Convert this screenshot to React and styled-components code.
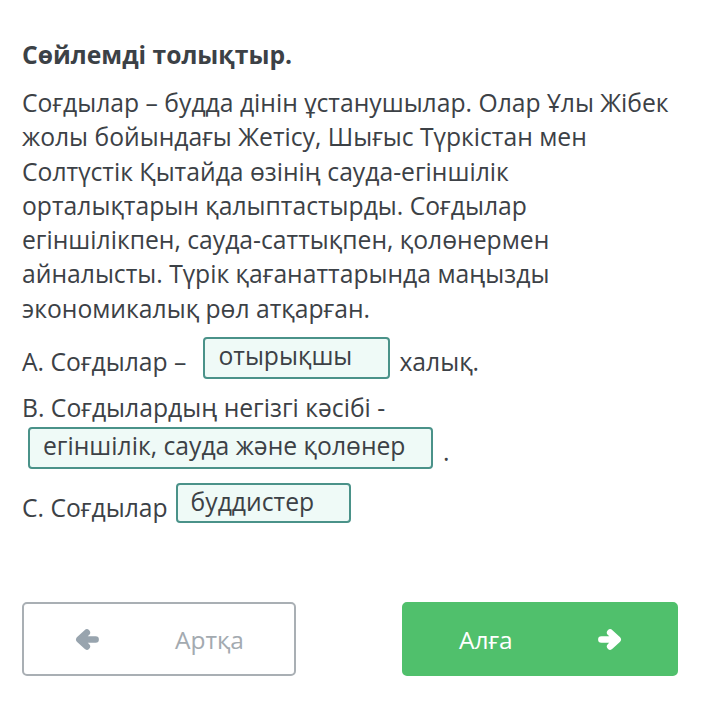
import React from 'react'
import styled, { createGlobalStyle } from 'styled-components'

const GlobalStyle = createGlobalStyle`
  html, body {
    margin: 0;
    padding: 0;
    background: #fff;
  }
  body {
    font-family: "Open Sans", "Noto Sans", sans-serif;
    color: #3c4146;
  }
`

const Page = styled.div`
  width: 709px;
  height: 713px;
  box-sizing: border-box;
  padding: 38px 20px 0 22px;
  display: flex;
  flex-direction: column;
  font-size: 24.7px;
`

const Title = styled.h2`
  margin: 0;
  font-size: 24.7px;
  font-weight: 700;
  line-height: 34px;
  color: #3c4146;
`

const Passage = styled.p`
  margin: 14px 0 0;
  line-height: 34.3px;
`

const Sentences = styled.div`
  margin-top: 11px;
  display: flex;
  flex-direction: column;
  line-height: 34px;
`

const Line = styled.div`
  display: flex;
  align-items: flex-start;
  margin-top: ${p => p.$top || 0}px;
  padding-left: ${p => p.$indent || 0}px;
`

const Text = styled.span`
  margin-top: ${p => (p.$flush ? 0 : 8)}px;
  white-space: nowrap;
`

const Blank = styled.span`
  display: inline-flex;
  box-sizing: border-box;
  width: ${p => p.$w}px;
  height: ${p => p.$h || 42}px;
  margin: 0 ${p => p.$mr || 9}px 0 ${p => p.$ml || 0}px;
  padding: 0 13px;
  border: 2px solid #4a9289;
  border-radius: 4px;
  background: #effaf7;
  color: #3c4146;
  white-space: nowrap;
`

const Footer = styled.div`
  margin-top: auto;
  margin-bottom: 37px;
  padding-right: 11px;
  display: flex;
  justify-content: space-between;
`

const NavButton = styled.button`
  box-sizing: border-box;
  width: ${p => p.$w}px;
  height: 74px;
  display: flex;
  align-items: center;
  padding: 0 0 0 ${p => p.$pl}px;
  gap: ${p => p.$gap}px;
  border-radius: 5px;
  font-family: "Open Sans", sans-serif;
  font-size: 24.5px;
  cursor: pointer;
  border: 2px solid ${p => (p.$primary ? '#50c06c' : '#a9afb4')};
  background: ${p => (p.$primary ? '#50c06c' : '#fff')};
  color: ${p => (p.$primary ? '#fff' : '#a3aab0')};
`

const ArrowSvg = styled.svg`
  width: 24px;
  height: 21px;
  flex: none;
  fill: none;
  stroke: ${p => (p.$light ? '#fff' : '#98a4ae')};
  stroke-width: 6.6;
  stroke-linecap: round;
  stroke-linejoin: round;
  transform: ${p => (p.$left ? 'scaleX(-1)' : 'none')};
`

function Arrow({ left, light }) {
  return (
    <ArrowSvg viewBox="0 0 24 21" $left={left} $light={light}>
      <path d="M3.4 10.5H19.5M12.2 3.6L19.6 10.5L12.2 17.4" />
    </ArrowSvg>
  )
}

export default function App() {
  return (
    <>
      <GlobalStyle />
      <Page>
        <Title>Сөйлемді толықтыр.</Title>
        <Passage>
          Соғдылар – будда дінін ұстанушылар. Олар Ұлы Жібек жолы бойындағы Жетісу, Шығыс Түркістан мен
          Солтүстік Қытайда өзінің сауда-егіншілік орталықтарын қалыптастырды. Соғдылар егіншілікпен,
          сауда-саттықпен, қолөнермен айналысты. Түрік қағанаттарында маңызды экономикалық рөл атқарған.
        </Passage>
        <Sentences>
          <Line>
            <Text>А. Соғдылар –</Text>
            <Blank $w={187} $ml={17}>отырықшы</Blank>
            <Text>халық.</Text>
          </Line>
          <Line $top={12}>
            <Text $flush>В. Соғдылардың негізгі кәсібі -</Text>
          </Line>
          <Line $top={2} $indent={6}>
            <Blank $w={405} $mr={10}>егіншілік, сауда және қолөнер</Blank>
            <Text>.</Text>
          </Line>
          <Line $top={14}>
            <Text>С. Соғдылар</Text>
            <Blank $w={175} $h={40} $ml={8}>буддистер</Blank>
          </Line>
        </Sentences>
        <Footer>
          <NavButton $w={274} $pl={51} $gap={76}>
            <Arrow left />
            <span>Артқа</span>
          </NavButton>
          <NavButton $primary $w={276} $pl={55} $gap={85}>
            <span>Алға</span>
            <Arrow light />
          </NavButton>
        </Footer>
      </Page>
    </>
  )
}
